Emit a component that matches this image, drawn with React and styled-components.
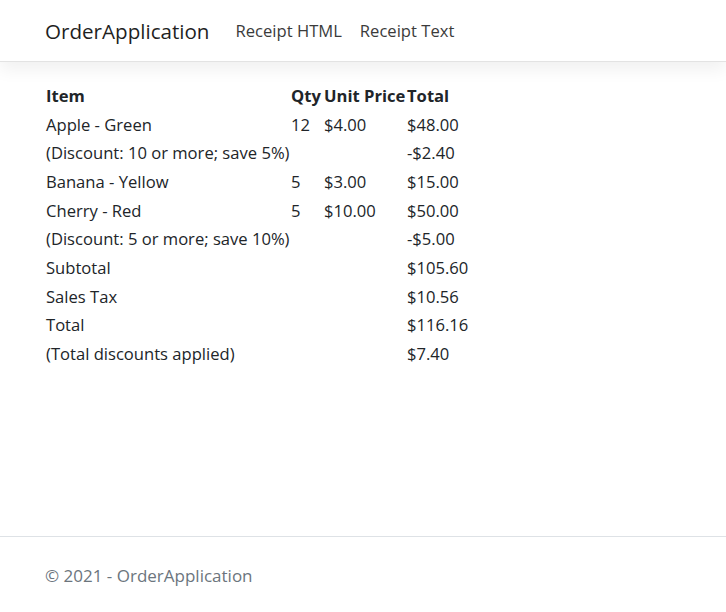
import styled, { createGlobalStyle } from "styled-components";
import React from "react";

const GlobalStyle = createGlobalStyle`
    html, body {
        margin: 0;
        padding: 0;
        background: #ffffff;
    }
    body {
        font-family: "Open Sans", "Noto Sans", sans-serif;
        font-size: 16.6px;
        color: #212529;
    }
`

const lines = [
    { item: "Apple - Green", qty: "12", price: "$4.00", total: "$48.00" },
    { item: "(Discount: 10 or more; save 5%)", total: "-$2.40" },
    { item: "Banana - Yellow", qty: "5", price: "$3.00", total: "$15.00" },
    { item: "Cherry - Red", qty: "5", price: "$10.00", total: "$50.00" },
    { item: "(Discount: 5 or more; save 10%)", total: "-$5.00" },
    { item: "Subtotal", total: "$105.60" },
    { item: "Sales Tax", total: "$10.56" },
    { item: "Total", total: "$116.16" },
    { item: "(Total discounts applied)", total: "$7.40" },
];

export default function App() {
    return (
        <Page>
            <GlobalStyle />
            <Navbar>
                <Brand href="#">OrderApplication</Brand>
                <NavLinks>
                    <NavLink href="#">Receipt HTML</NavLink>
                    <NavLink href="#">Receipt Text</NavLink>
                </NavLinks>
            </Navbar>
            <Main>
                <Table>
                    <thead>
                        <tr>
                            <Head width={245}>Item</Head>
                            <Head width={33}>Qty</Head>
                            <Head width={83}>Unit Price</Head>
                            <Head>Total</Head>
                        </tr>
                    </thead>
                    <tbody>
                        {lines.map((l, i) => (
                            <tr key={i}>
                                <Cell>{l.item}</Cell>
                                <Cell>{l.qty}</Cell>
                                <Cell>{l.price}</Cell>
                                <Cell>{l.total}</Cell>
                            </tr>
                        ))}
                    </tbody>
                </Table>
            </Main>
            <Footer>© 2021 - OrderApplication</Footer>
        </Page>
    )
}

const Page = styled.div`
    display: flex;
    flex-direction: column;
    min-height: 612px;
`

const Navbar = styled.nav`
    display: flex;
    align-items: center;
    height: 61px;
    padding: 0 45px;
    border-bottom: 1px solid #e3e3e3;
    box-shadow: 0 8px 16px rgba(0, 0, 0, 0.06);
`

const Brand = styled.a`
    font-size: 20.6px;
    color: #1f1f1f;
    text-decoration: none;
    margin-right: 18px;
    margin-top: 1px;
`

const NavLinks = styled.div`
    display: flex;
    gap: 2px;
`

const NavLink = styled.a`
    font-size: 16.6px;
    color: #3b3b3b;
    text-decoration: none;
    padding: 0 8px;
`

const Main = styled.main`
    flex: 1;
    padding: 19px 45px 0 46px;
`

const Table = styled.table`
    table-layout: fixed;
    border-collapse: collapse;
    width: 430px;
`

const Head = styled.th`
    width: ${p => p.width ? p.width + "px" : "auto"};
    text-align: left;
    font-weight: 700;
    padding: 0;
    height: 28.7px;
    white-space: nowrap;
`

const Cell = styled.td`
    padding: 0;
    height: 28.7px;
    white-space: nowrap;
`

const Footer = styled.footer`
    border-top: 1px solid #dee2e6;
    padding: 27px 45px 24px;
    line-height: 24px;
    font-size: 17px;
    color: #6c757d;
`
